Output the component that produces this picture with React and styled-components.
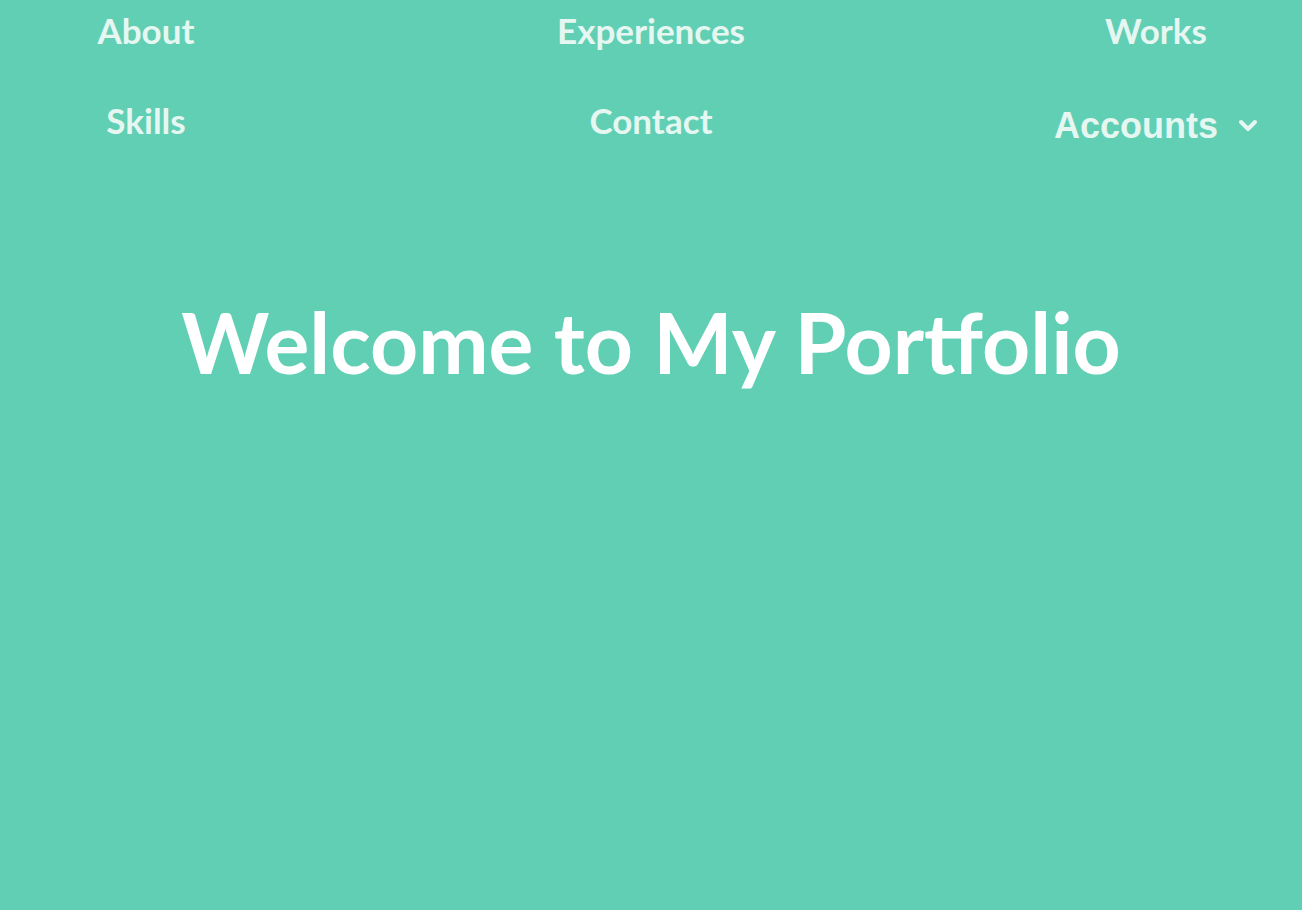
import React from 'react'
import styled, { createGlobalStyle } from 'styled-components'

const GlobalStyle = createGlobalStyle`
    html, body {
        margin: 0;
        padding: 0;
        background: #61CFB4;
    }
    body {
        font-family: 'Lato', 'Open Sans', sans-serif;
    }
`

const Page = styled.div`
    min-height: 910px;
    background: #61CFB4;
`

const Nav = styled.nav`
    display: grid;
    grid-template-columns: repeat(3, 292px);
    justify-content: space-between;
    row-gap: 44px;
    padding-top: 7px;
`

const NavItem = styled.a`
    display: flex;
    align-items: center;
    justify-content: center;
    column-gap: 20px;
    height: 46px;
    font-family: 'Lato', sans-serif;
    font-weight: 700;
    font-size: 35px;
    color: #E6F7F2;
    text-decoration: none;
    cursor: pointer;
`

const Dropdown = styled(NavItem)`
    font-family: 'Liberation Sans', Arial, sans-serif;
    font-size: 36px;
    padding-top: 6px;
`

const Hero = styled.h1`
    margin: 142px 0 0;
    text-align: center;
    font-family: 'Lato', sans-serif;
    font-weight: 700;
    font-size: 84px;
    color: #FFFFFF;
`

const links = ['About', 'Experiences', 'Works', 'Skills', 'Contact']

const Chevron = () => (
    <svg width="20" height="14" viewBox="0 0 20 14">
        <path d="M3 3 L10 10 L17 3" fill="none" stroke="#E6F7F2" strokeWidth="4" strokeLinecap="round" strokeLinejoin="round" />
    </svg>
)

const App = () => {
    return (
        <Page>
            <GlobalStyle />
            <Nav>
                {links.map(item => (
                    <NavItem key={item}>{item}</NavItem>
                ))}
                <Dropdown>
                    Accounts
                    <Chevron />
                </Dropdown>
            </Nav>
            <Hero>Welcome to My Portfolio</Hero>
        </Page>
    )
}

export default App
